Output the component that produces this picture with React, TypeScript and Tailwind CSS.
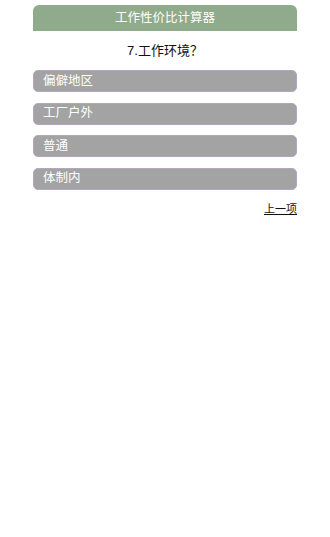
import React from "react";

export default function App() {
  const opts = ["偏僻地区", "工厂户外", "普通", "体制内"];
  return (
    <div
      className="w-[330px] min-h-[537px] bg-white"
      style={{ fontFamily: '"Liberation Sans", "Noto Sans CJK SC", sans-serif' }}
    >
      <div className="mx-[33px] pt-[5px]">
        <div className="h-[26px] bg-[#8fab8c] rounded-t-[6px] flex items-center justify-center text-white text-[12.5px]">
          工作性价比计算器
        </div>
        <div className="h-[39px] flex items-center justify-center text-[13px] text-[#111]">
          7.工作环境？
        </div>
        <div className="flex flex-col gap-[10.5px]">
          {opts.map((o) => (
            <div
              key={o}
              className="h-[22px] bg-[#a3a3a3] border border-[#b2a6c2] rounded-[5px] flex items-center pl-[9px] text-white text-[12.5px]"
            >
              {o}
            </div>
          ))}
        </div>
        <div className="flex justify-end mt-[11px]">
          <span className="text-[11px] text-[#111] underline">上一项</span>
        </div>
      </div>
    </div>
  );
}
